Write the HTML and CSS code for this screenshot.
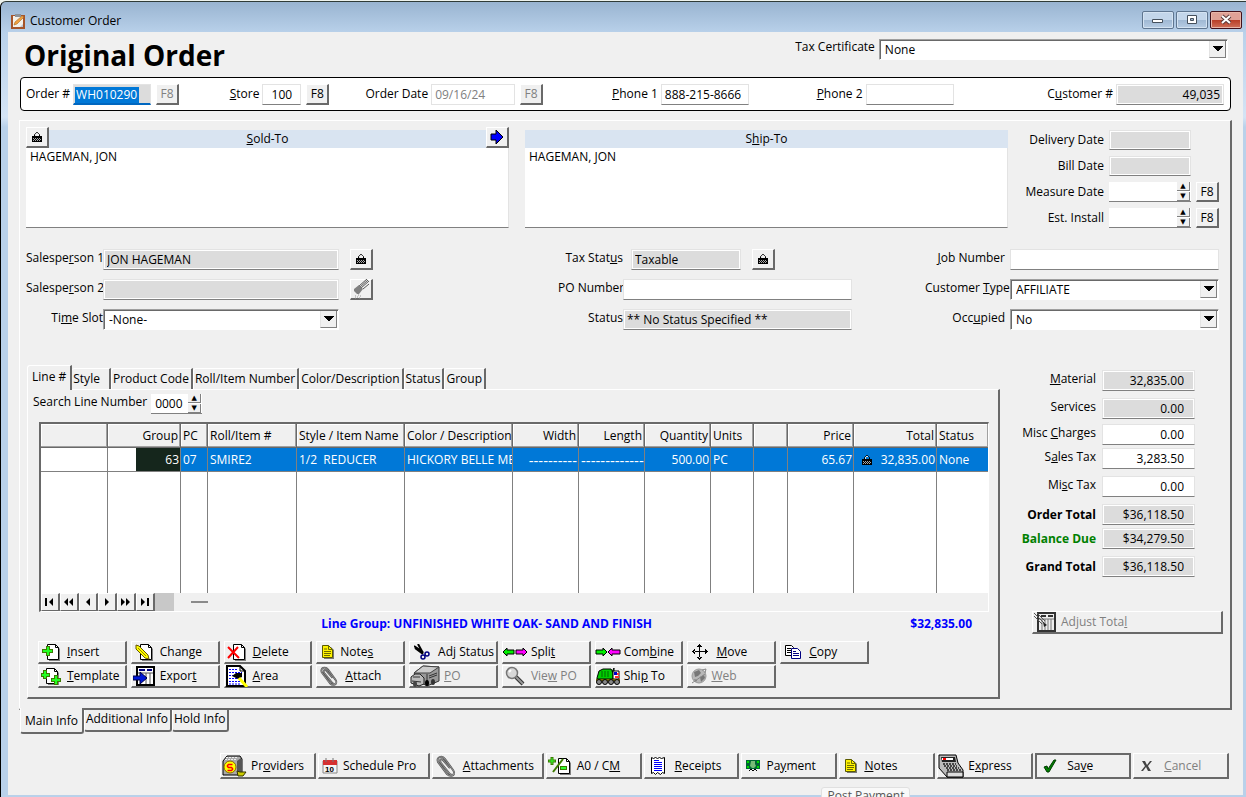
FILE: index.html
```
<!DOCTYPE html>
<html lang="en">
<head>
  <meta charset="UTF-8">
  <meta name="viewport" content="width=device-width, initial-scale=1.0">
  <title>Customer Order</title>
  <link rel="stylesheet" href="styles.css">
</head>
<body>
  <!-- shared icons -->
  <svg class="sprite" width="0" height="0" aria-hidden="true">
    <symbol id="lock" viewBox="0 0 12 12">
      <path d="M3.500 5V3.500l1-1 1-1h1l1 1 1 1V5" fill="none" stroke="#000" stroke-width="1"/>
      <path d="M1 5h10v6H1z" fill="#000"/>
      <path d="M2 7h1v1H2zM4 7h1v1H4zM6 7h1v1H6zM8 7h1v1H8zM3 8h1v1H3zM5 8h1v1H5zM7 8h1v1H7zM9 8h1v1H9zM2 9h1v1H2zM4 9h1v1H4zM6 9h1v1H6zM8 9h1v1H8z" fill="#aaa"/>
      <path d="M4 3h1v2H4zM5 2h2v1H5z" fill="#ddd"/>
    </symbol>
    <symbol id="down" viewBox="0 0 10 6"><path d="M0 0h10v1H9v1H8v1H7v1H6v1H4V4H3V3H2V2H1V1H0z"/></symbol>
    <symbol id="page" viewBox="0 0 20 20">
      <path d="M8 4h8l3 3v12H8z" fill="#808080"/>
      <path d="M6.500 2.500h8l3 3v12h-11z" fill="#fff" stroke="#000"/>
      <path d="M14.500 2.500v3h3" fill="none" stroke="#000"/>
    </symbol>
    <symbol id="note" viewBox="0 0 12 14">
      <path d="M2 2h7l3 3v9H2z" fill="#777"/>
      <path d="M.5.5h6l4 4v8H.5z" fill="#fff200" stroke="#5a5a00"/>
      <path d="M6.500.5v4h4M2 4h3M2 6.500h7M2 8.500h7M2 10.500h6" fill="none" stroke="#6b6b00"/>
    </symbol>
    <symbol id="clip" viewBox="0 0 20 22">
      <path d="M14 13L7 5C5 3 3 5 5 8l8 10c3 4 7 1 4-3L9 4C6 0 0 2 2 7l9 12c3 3 7 2 7-1" fill="none" stroke="#555" stroke-width="2"/>
      <path d="M14 13L7 5C5 3 3 5 5 8l8 10c3 4 7 1 4-3L9 4C6 0 0 2 2 7l9 12c3 3 7 2 7-1" fill="none" stroke="#aaa" stroke-width=".7"/>
    </symbol>
  </svg>

  <div class="window">
    <header class="titlebar">
      <svg class="app-icon" width="16" height="16" viewBox="0 0 16 16">
        <path d="M1 2h14v14H1z" fill="#a5542a"/><path d="M3 3h10v11H3z" fill="#f4f1ea"/>
        <path d="M5 1h6v3H5z" fill="#8d9299"/><path d="M4 12l1-3 7-6 2 1-7 7z" fill="#f0a040" stroke="#a66a20" stroke-width=".6"/>
        <path d="M10 14l3-3v3z" fill="#b9c4d2"/>
      </svg>
      <span class="caption">Customer Order</span>
      <button class="win-btn" aria-label="Minimize"><svg width="12" height="12" viewBox="0 0 12 12"><path d="M.5 5.500h10v3h-10z" fill="#fff" stroke="#45505c"/></svg></button>
      <button class="win-btn" aria-label="Maximize"><svg width="12" height="12" viewBox="0 0 12 12"><path d="M1.500 1.500h9v8h-9z" fill="#fff" stroke="#45505c"/><path d="M4.500 4.500h3v2h-3z" fill="#9db4cf" stroke="#45505c"/></svg></button>
      <button class="win-btn close" aria-label="Close"><svg width="12" height="12" viewBox="0 0 12 12"><path d="M2 2l8 7M10 2L2 9" stroke="#5a3a3a" stroke-width="4"/><path d="M2 2l8 7M10 2L2 9" stroke="#fff" stroke-width="2"/></svg></button>
    </header>

    <main class="client">
      <div class="heading">
        <h1>Original Order</h1>
        <label for="taxCert">Tax Certificate</label>
        <div class="combo">
          <select id="taxCert"><option>None</option></select>
          <span class="drop"><svg width="10" height="6"><use href="#down"/></svg></span>
        </div>
      </div>

      <section class="order-bar">
        <div class="pair">
          <label for="orderNo">Order #</label>
          <div class="order-no"><input class="field" id="orderNo" value="WH010290"></div>
          <button class="key" disabled>F8</button>
        </div>
        <div class="pair">
          <label for="store"><u>S</u>tore</label>
          <input class="field store" id="store" value="100">
          <button class="key">F8</button>
        </div>
        <div class="pair">
          <label for="orderDate">Order Date</label>
          <input class="field date" id="orderDate" value="09/16/24" disabled>
          <button class="key" disabled>F8</button>
        </div>
        <div class="pair">
          <label for="phone1"><u>P</u>hone 1</label>
          <input class="field phone" id="phone1" value="888-215-8666">
        </div>
        <div class="pair">
          <label for="phone2"><u>P</u>hone 2</label>
          <input class="field phone" id="phone2">
        </div>
        <div class="pair end">
          <label for="customerNo">C<u>u</u>stomer #</label>
          <input class="field customer" id="customerNo" value="49,035" readonly>
        </div>
      </section>

      <section class="sheet">
        <div class="parties">
          <div class="party">
            <div class="party-head">
              <button class="key" aria-label="Lock sold-to"><svg width="12" height="12"><use href="#lock"/></svg></button>
              <label for="soldTo"><u>S</u>old-To</label>
              <button class="key" aria-label="Copy to ship-to"><svg width="14" height="16" viewBox="0 0 14 16"><path d="M1 5h5V1l7 7-7 7v-4H1z" fill="#00f" stroke="#000"/></svg></button>
            </div>
            <textarea id="soldTo">HAGEMAN, JON</textarea>
          </div>
          <div class="party">
            <div class="party-head"><label for="shipTo">S<u>h</u>ip-To</label></div>
            <textarea id="shipTo">HAGEMAN, JON</textarea>
          </div>
          <div class="dates">
            <label for="delivery">Delivery Date</label>
            <input class="field" id="delivery" readonly>
            <label for="bill">Bill Date</label>
            <input class="field" id="bill" readonly>
            <label for="measure">Measure Date</label>
            <div class="spin"><input id="measure"><span class="arrows"><button aria-label="Up">&#9650;</button><button aria-label="Down">&#9660;</button></span></div>
            <button class="key">F8</button>
            <label for="install">Est. Install</label>
            <div class="spin"><input id="install"><span class="arrows"><button aria-label="Up">&#9650;</button><button aria-label="Down">&#9660;</button></span></div>
            <button class="key">F8</button>
          </div>
        </div>

        <div class="details">
          <div class="col sales">
            <label for="sp1">Salespe<u>r</u>son 1</label>
            <input class="field" id="sp1" value="JON HAGEMAN" readonly>
            <button class="key" aria-label="Lock salesperson"><svg width="12" height="12"><use href="#lock"/></svg></button>
            <label for="sp2">Salespe<u>r</u>son 2</label>
            <input class="field" id="sp2" readonly>
            <button class="key" aria-label="Clear salesperson"><svg width="16" height="20" viewBox="0 0 16 20"><path d="M6 7l8-7M8 9l8-7M7 8l8-7M10 10l6-5" stroke="#555"/><path d="M1 10l5-4 4 4-4 5H4L1 12z" fill="#808080"/><path d="M2 17h1M5 16h1M4 18h1M7 17h1M2 19h1M6 19h1" stroke="#999"/></svg></button>
            <label for="slot">Ti<u>m</u>e Slot</label>
            <div class="combo">
              <select id="slot"><option>-None-</option></select>
              <span class="drop"><svg width="10" height="6"><use href="#down"/></svg></span>
            </div>
          </div>
          <div class="col status">
            <label for="taxStatus">Tax Stat<u>u</u>s</label>
            <div class="tax">
              <input class="field" id="taxStatus" value="Taxable" readonly>
              <button class="key" aria-label="Lock tax status"><svg width="12" height="12"><use href="#lock"/></svg></button>
            </div>
            <label for="po">PO Number</label>
            <input class="field" id="po">
            <label for="orderStatus">Status</label>
            <input class="field" id="orderStatus" value="** No Status Specified **" readonly>
          </div>
          <div class="col job">
            <label for="job"><u>J</u>ob Number</label>
            <input class="field" id="job">
            <label for="custType">Customer <u>T</u>ype</label>
            <div class="combo">
              <select id="custType"><option>AFFILIATE</option></select>
              <span class="drop"><svg width="10" height="6"><use href="#down"/></svg></span>
            </div>
            <label for="occupied">Occ<u>u</u>pied</label>
            <div class="combo">
              <select id="occupied"><option>No</option></select>
              <span class="drop"><svg width="10" height="6"><use href="#down"/></svg></span>
            </div>
          </div>
        </div>

        <div class="lower">
          <div class="lines">
            <nav class="tabs">
              <button class="tab active">Line #</button>
              <button class="tab style">Style</button>
              <button class="tab">Product Code</button>
              <button class="tab">Roll/Item Number</button>
              <button class="tab">Color/Description</button>
              <button class="tab">Status</button>
              <button class="tab">Group</button>
            </nav>
            <div class="lines-panel">
              <div class="search">
                <label for="searchLine">Search Line Number</label>
                <div class="spin"><input id="searchLine" value="0000"><span class="arrows"><button aria-label="Up">&#9650;</button><button aria-label="Down">&#9660;</button></span></div>
              </div>

              <div class="grid">
                <table>
                  <colgroup>
                    <col class="w67"><col class="w73"><col class="w27"><col class="w89"><col class="w108"><col class="w108"><col class="w66">
                    <col class="w66"><col class="w66"><col class="w43"><col class="w34"><col class="w66"><col class="w83"><col class="w51">
                  </colgroup>
                  <thead>
                    <tr>
                      <th></th><th class="num">Group</th><th>PC</th><th>Roll/Item #</th><th>Style / Item Name</th><th>Color / Description</th><th class="num">Width</th>
                      <th class="num">Length</th><th class="num">Quantity</th><th>Units</th><th></th><th class="num">Price</th><th class="num">Total</th><th>Status</th>
                    </tr>
                  </thead>
                  <tbody>
                    <tr class="selected">
                      <td class="blank"></td><td class="num group">63</td><td>07</td><td>SMIRE2</td><td>1/2  REDUCER</td><td>HICKORY BELLE ME</td><td class="num dashes">----------</td>
                      <td class="num dashes">-------------</td><td class="num">500.00</td><td>PC</td><td></td><td class="num">65.67</td>
                      <td class="num"><span class="locked"><svg width="12" height="12"><use href="#lock"/></svg>32,835.00</span></td><td>None</td>
                    </tr>
                    <tr class="empty">
                      <td></td><td></td><td></td><td></td><td></td><td></td><td></td><td></td><td></td><td></td><td></td><td></td><td></td><td></td>
                    </tr>
                  </tbody>
                </table>
                <div class="pager">
                  <button aria-label="First"><svg width="12" height="8" viewBox="0 0 12 8"><path d="M1 0h2v8H1zM9 0v8L5 4z"/></svg></button>
                  <button aria-label="Previous page"><svg width="12" height="8" viewBox="0 0 12 8"><path d="M5 0v8L1 4zM10 0v8L6 4z"/></svg></button>
                  <button aria-label="Previous"><svg width="12" height="8" viewBox="0 0 12 8"><path d="M8 0v8L4 4z"/></svg></button>
                  <button aria-label="Next"><svg width="12" height="8" viewBox="0 0 12 8"><path d="M4 0v8l4-4z"/></svg></button>
                  <button aria-label="Next page"><svg width="12" height="8" viewBox="0 0 12 8"><path d="M1 0v8l4-4zM6 0v8l4-4z"/></svg></button>
                  <button aria-label="Last"><svg width="12" height="8" viewBox="0 0 12 8"><path d="M2 0v8l4-4zM8 0h2v8H8z"/></svg></button>
                  <span class="track"></span>
                  <span class="thumb"></span>
                </div>
              </div>

              <div class="group-line">
                <strong class="group-name">Line Group: UNFINISHED WHITE OAK- SAND AND FINISH</strong>
                <strong class="group-sum">$32,835.00</strong>
              </div>

              <div class="actions">
                <button class="btn"><span class="ico"><svg width="20" height="20" viewBox="0 0 20 20"><use href="#page"/><path d="M7 4v10M1 9h11" stroke="#3d7a00" stroke-width="4"/><path d="M7 5v8M2 9h9" stroke="#2f2" stroke-width="2"/></svg></span><span><u>I</u>nsert</span></button>
                <button class="btn"><span class="ico"><svg width="20" height="20" viewBox="0 0 20 20"><use href="#page"/><path d="M2 3l3 1 9 9 1 4-4-1-9-9z" fill="#ff0" stroke="#665500"/><path d="M4 6l8 8" stroke="#998800"/></svg></span><span>Chan<u>g</u>e</span></button>
                <button class="btn"><span class="ico"><svg width="20" height="20" viewBox="0 0 20 20"><use href="#page"/><path d="M1 5l11 11M11 5L1 16" stroke="#f00" stroke-width="2"/></svg></span><span><u>D</u>elete</span></button>
                <button class="btn small-ico"><span class="ico"><svg width="12" height="14"><use href="#note"/></svg></span><span>Note<u>s</u></span></button>
                <button class="btn"><span class="ico"><svg width="16" height="16" viewBox="0 0 16 16"><path d="M1 4l8 6M4 0l5 9M0 2l9 6" stroke="#000" stroke-width="2"/><circle cx="13" cy="10" r="2" fill="none" stroke="#000080" stroke-width="1.500"/><circle cx="9" cy="13" r="2" fill="none" stroke="#000080" stroke-width="1.500"/></svg></span><span>Adj Status</span></button>
                <button class="btn"><span class="ico"><svg width="26" height="10" viewBox="0 0 26 10"><path d="M1 5l4-4v2h7v4H5v2z" fill="#0e0" stroke="#000"/><path d="M25 5l-4-4v2h-7v4h7v2z" fill="#f0f" stroke="#000"/></svg></span><span>Spli<u>t</u></span></button>
                <button class="btn"><span class="ico"><svg width="26" height="10" viewBox="0 0 26 10"><path d="M12 5L8 1v2H1v4h7v2z" fill="#0e0" stroke="#000"/><path d="M13 5l4-4v2h8v4h-8v2z" fill="#f0f" stroke="#000"/></svg></span><span>Com<u>b</u>ine</span></button>
                <button class="btn"><span class="ico"><svg width="18" height="18" viewBox="0 0 18 18"><path d="M8 3h1v12H8zM3 8h12v1H3zM8 1h1v1h1v1h1v1H6V3h1V2h1zM8 17h1v-1h1v-1h1v-1H6v1h1v1h1zM1 8v1h1v1h1v1h1V6H3v1H2v1zM17 8v1h-1v1h-1v1h-1V6h1v1h1v1z"/></svg></span><span><u>M</u>ove</span></button>
                <button class="btn"><span class="ico"><svg width="16" height="14" viewBox="0 0 16 14"><path d="M.5.5h6l2 2v8h-8z" fill="#fff" stroke="#000"/><path d="M2 3.500h4M2 5.500h4M2 7.500h4" stroke="#000"/><path d="M6.500 3.500h6l3 3v7h-9z" fill="#fff" stroke="#000080"/><path d="M8 6.500h3M8 8.500h6M8 10.500h6" stroke="#000080"/></svg></span><span><u>C</u>opy</span></button>

                <button class="btn"><span class="ico"><svg width="22" height="20" viewBox="0 0 22 20"><use href="#page" width="20" height="20"/><path d="M5 4v9M1 9h9M16 9v10M11 14h10" stroke="#3d7a00" stroke-width="4"/><path d="M5 5v7M2 9h7M16 10v8M12 14h8" stroke="#2f2" stroke-width="2"/></svg></span><span><u>T</u>emplate</span></button>
                <button class="btn"><span class="ico"><svg width="22" height="20" viewBox="0 0 22 20"><path d="M4 1h17v18H4z" fill="#fff" stroke="#000" stroke-width="2"/><path d="M6 3h6v2H6zM14 3h5v2h-5z" fill="#000080"/><path d="M5 7h15M13 7v11M17 7v11" stroke="#555"/><path d="M0 10h7V6l7 6-7 6v-4H0z" fill="#0018d8" stroke="#000040"/></svg></span><span>Expor<u>t</u></span></button>
                <button class="btn"><span class="ico"><svg width="22" height="22" viewBox="0 0 22 22"><path d="M1 1h13l5 5v15H1z" fill="#fff" stroke="#000" stroke-width="2"/><path d="M14 1v5h5" fill="none" stroke="#000"/><path d="M3 4.500h9M3 7.500h13M3 10.500h13M3 13.500h9M3 16.500h11M3 19h12" stroke="#00f" stroke-dasharray="2 1"/><path d="M6 11l4-3h6v4l-4 2z" fill="#000"/><path d="M13 13l8 9" stroke="#ff0" stroke-width="3"/></svg></span><span><u>A</u>rea</span></button>
                <button class="btn"><span class="ico"><svg width="20" height="20"><use href="#clip"/></svg></span><span><u>A</u>ttach</span></button>
                <button class="btn big-ico" disabled><span class="ico"><svg width="30" height="22" viewBox="0 0 30 22"><path d="M4 8l9-7 16 1v14l-12 5-7-4z" fill="#999" stroke="#333"/><path d="M4 8l9-7 16 1-9 6z" fill="#ccc" stroke="#444"/><path d="M17 9v12" stroke="#333"/><path d="M1 12l4-3h5l4 4v6l-5 2-8-3z" fill="#bbb" stroke="#222"/><path d="M3 12h7M2 16l9 1M19 11l8-3M19 13l8-3" stroke="#333"/><ellipse cx="17" cy="18" rx="2" ry="3"/><ellipse cx="23" cy="17" rx="2" ry="3" fill="#333"/><ellipse cx="5" cy="19" rx="2" ry="3" fill="#444"/></svg></span><span><u>P</u>O</span></button>
                <button class="btn" disabled><span class="ico"><svg width="20" height="20" viewBox="0 0 20 20"><path d="M11 11l7 7" stroke="#333" stroke-width="4"/><path d="M11 11l7 7" stroke="#999" stroke-width="2"/><circle cx="7" cy="7" r="5.500" fill="#d8d8d8" stroke="#777" stroke-width="1.500"/><path d="M4 6l2-2" stroke="#fff" stroke-width="2"/></svg></span><span>Vie<u>w</u> PO</span></button>
                <button class="btn"><span class="ico"><svg width="26" height="18" viewBox="0 0 26 18"><path d="M2 11l2-7 4-2h8l2 3v7H2z" fill="#0c0" stroke="#000"/><path d="M7 4v6M10 4v6M13 4v6" stroke="#060"/><path d="M17 5l2-4v4z" fill="#0c0" stroke="#000"/><path d="M18 4h6v8h-6z" fill="#fff" stroke="#000"/><path d="M19 5h3v3h-3z" fill="#00c"/><path d="M22 6h2v2h-2zM20 9h4v2h-4z" fill="#f33"/><path d="M1 12h24v2H1z" fill="#7a6a00"/><g fill="#888" stroke="#000"><circle cx="4" cy="15" r="2.500"/><circle cx="10" cy="15" r="2.500"/><circle cx="16" cy="15" r="2.500"/><circle cx="22" cy="15" r="2.500"/></g></svg></span><span>Shi<u>p</u> To</span></button>
                <button class="btn small-ico" disabled><span class="ico"><svg width="16" height="16" viewBox="0 0 16 16"><circle cx="8" cy="8" r="7" fill="#b8b8b8" stroke="#999"/><path d="M3 4l5-2 2 3-3 3-3 1zM9 9l4-2 1 3-4 4zM3 11l3 1-1 2z" fill="#777"/><path d="M11 2l4-1-1 4M1 15l13-9" stroke="#888" fill="none"/></svg></span><span><u>W</u>eb</span></button>
              </div>
            </div>
          </div>

          <aside class="totals">
            <div class="sums">
              <label for="material"><u>M</u>aterial</label><input class="field" id="material" value="32,835.00" readonly>
              <label for="services">Services</label><input class="field" id="services" value="0.00" readonly>
              <label for="misc">Misc <u>C</u>harges</label><input class="field" id="misc" value="0.00">
              <label for="salesTax">S<u>a</u>les Tax</label><input class="field" id="salesTax" value="3,283.50">
              <label for="miscTax">Mi<u>s</u>c Tax</label><input class="field" id="miscTax" value="0.00">
              <label class="strong" for="orderTotal">Order Total</label><input class="field" id="orderTotal" value="$36,118.50" readonly>
              <label class="strong due" for="balance">Balance Due</label><input class="field" id="balance" value="$34,279.50" readonly>
              <label class="strong" for="grand">Grand Total</label><input class="field" id="grand" value="$36,118.50" readonly>
            </div>
            <button class="btn adjust" disabled><span class="ico"><svg width="22" height="20" viewBox="0 0 22 20"><path d="M4 1h17v18H4z" fill="#eee" stroke="#333" stroke-width="2"/><path d="M7 3h5v2H7zM14 3h5v2h-5z" fill="#333"/><path d="M5 7h15M8 7v11M11 7v11M14 7v11M17 7v11" stroke="#777"/><path d="M0 1l10 10M0 4l8 8M3 1l8 8" stroke="#555"/><path d="M9 10l4 3-3 2z" fill="#222"/></svg></span><span>Adjust Tota<u>l</u></span></button>
          </aside>
        </div>
      </section>

      <nav class="sheet-tabs">
        <button class="active">Main Info</button>
        <button>Additional Info</button>
        <button>Hold Info</button>
      </nav>

      <footer class="commands">
        <button class="btn"><span class="ico"><svg width="26" height="22" viewBox="0 0 26 22"><path d="M2 6l4-5h13l2 3v14l-3 2H2z" fill="#aaa" stroke="#000"/><path d="M5 2.500h12M4 4.500h12" stroke="#eee" stroke-dasharray="2 1"/><path d="M16 6l4-3v14l-4 2z" fill="#555"/><circle cx="9" cy="12" r="6" fill="#ff0" stroke="#886600"/><path d="M11.500 9.500h-4l-1 1v1l1 1h3l1 1v1l-1 1H6.500" fill="none" stroke="#f00" stroke-width="1.500"/><path d="M16 16l3 1h6l-3 4h-5z" fill="#cc0" stroke="#330"/></svg></span><span>Pr<u>o</u>viders</span></button>
        <button class="btn small-ico"><span class="ico"><svg width="16" height="16" viewBox="0 0 16 16"><path d="M1 3h14v12H1z" fill="#f6f6f6" stroke="#888"/><path d="M1 2h14v5H1z" fill="#d63030"/><path d="M4 0v4M11 0v4" stroke="#777"/><text class="cal-day" x="3" y="14">10</text></svg></span><span>Schedule Pro</span></button>
        <button class="btn"><span class="ico"><svg width="20" height="22"><use href="#clip"/></svg></span><span><u>A</u>ttachments</span></button>
        <button class="btn"><span class="ico"><svg width="24" height="20" viewBox="0 0 24 20"><use href="#page" x="4" width="20" height="20"/><path d="M4 1v8M0 5h8" stroke="#3d7a00" stroke-width="3"/><path d="M4 2v6M1 5h6" stroke="#3f3"/><path d="M15 3L5 16" stroke="#3d7a00" stroke-width="2"/><path d="M12 12h7" stroke="#3d7a00" stroke-width="4"/><path d="M13 12h5" stroke="#3f3" stroke-width="2"/></svg></span><span>A0 / C<u>M</u></span></button>
        <button class="btn"><span class="ico"><svg width="16" height="20" viewBox="0 0 16 20"><path d="M1.500 1.500l2 1 2-1 2 1 2-1 2 1 3-1v16l-2-1-2 2-3-2-2 2-2-2-2 1z" fill="#fff" stroke="#000"/><path d="M4 4.500h5M4 6.500h8M4 8.500h8M4 10.500h8M4 12.500h8M4 14.500h8" stroke="#00f"/></svg></span><span><u>R</u>eceipts</span></button>
        <div class="tip-host">
          <button class="btn small-ico"><span class="ico"><svg width="14" height="12" viewBox="0 0 14 12"><path d="M0 0h14v9H0z" fill="#063"/><path d="M1 1h2v2H1zM11 1h2v2h-2zM1 6h2v2H1zM11 6h2v2h-2z" fill="#0d0"/><path d="M5 1h4v3l1 2-2 2H6L4 6z" fill="#7b7"/><path d="M3 11l2-2 2 2 2-2 2 2" fill="none" stroke="#000"/></svg></span><span>Pa<u>y</u>ment</span></button>
          <span class="tip" role="tooltip">Post Payment</span>
        </div>
        <button class="btn small-ico"><span class="ico"><svg width="12" height="14"><use href="#note"/></svg></span><span><u>N</u>otes</span></button>
        <button class="btn"><span class="ico"><svg width="26" height="24" viewBox="0 0 26 24"><path d="M1 1h17l2 8 5 7v7H9L1 14z" fill="#bbb" stroke="#000"/><path d="M3 3h14l1 5H4z" fill="#222"/><path d="M4 4h11v2H4z" fill="#fff"/><path d="M5 4h3v2H5z" fill="#f00"/><path d="M5 10h13M6 12h13M8 14h13M9 16h14" stroke="#222" stroke-width="1.500" stroke-dasharray="2 1"/><path d="M9 18h16v5H9z" fill="#ddd" stroke="#000"/></svg></span><span>E<u>x</u>press</span></button>
        <button class="btn default"><span class="ico"><svg width="14" height="14" viewBox="0 0 14 14"><path d="M1 8l3-1 1 3 6-9h2L6 13H4z" fill="#008000" stroke="#003c00"/></svg></span><span>Sa<u>v</u>e</span></button>
        <button class="btn" disabled><span class="ico"><svg width="12" height="12" viewBox="0 0 12 12"><path d="M1 1h3l2 4 3-4h2L7 6l3 5H7L5 7l-3 4H0l4-5z" fill="#444"/></svg></span><span><u>C</u>ancel</span></button>
      </footer>
    </main>
  </div>
</body>
</html>
```
FILE: styles.css
```
* {
  box-sizing: border-box;
}
body {
  margin: 0;
  padding-top: 1px;
  background-color: #eef3ee;
  font-family: 'Segoe UI', 'Open Sans', 'Noto Sans', sans-serif;
  font-size: 12px;
  line-height: 16px;
  color: #000;
  overflow: hidden;
}
button, input, select, textarea {
  font: inherit;
  color: inherit;
  margin: 0;
  padding: 0;
  border: 0;
  min-width: 0;
  border-radius: 0;
  outline: none;
}
button {
  background-color: #f0f0f0;
  white-space: nowrap;
}
svg {
  display: block;
  flex: none;
}
.sprite {
  position: absolute;
}
label {
  white-space: nowrap;
}

/* window frame */
.window {
  min-height: calc(100vh - 1px);
  display: flex;
  flex-direction: column;
  border-top: 1px solid #2f3b38;
  border-left: 1px solid #000;
  border-top-left-radius: 6px;
  padding: 0 3px 2px 7px;
  background: linear-gradient(#99b4d1, #b9d1ea 31px, #d5e4f5 115px, #b9d1ea 125px);
}
.titlebar {
  display: flex;
  align-items: center;
  gap: 2px;
  height: 30px;
  padding: 7px 1px 0 2px;
}
.caption {
  flex: 1;
  padding-left: 2px;
}
.win-btn {
  width: 32px;
  height: 18px;
  margin-bottom: 1px;
  display: flex;
  align-items: center;
  justify-content: center;
  border: 1px solid #5f7690;
  border-radius: 2px;
  background: linear-gradient(#c3d6ea 48%, #9fb8d3 50%, #b7cde4);
  box-shadow: inset 0 0 0 1px #d4e3f2;
}
.win-btn.close {
  border-color: #43101a;
  background: linear-gradient(#e0a196 48%, #b83c25 50%, #d0705a);
  box-shadow: inset 0 0 0 1px #e8b5a8;
}
.client {
  flex: 1;
  padding: 0 12px;
  background-color: #f0f0f0;
}

/* shared controls */
.field {
  height: 21px;
  padding: 0 3px;
  border: 1px solid #e3e3e3;
  border-bottom-color: #808080;
  background-color: #fff;
}
.field:read-only {
  background-color: #dcdcdc;
  box-shadow: inset 0 0 0 1px #fff;
}
.field:disabled {
  background-color: #fff;
  border-bottom-color: #e3e3e3;
  box-shadow: none;
  color: #808080;
}
.key {
  width: 23px;
  height: 21px;
  display: flex;
  align-items: center;
  justify-content: center;
  border: 1px solid #fff;
  border-right: 2px solid #696969;
  border-bottom: 2px solid #696969;
}
.key:disabled {
  color: #808080;
}
.combo {
  display: flex;
  height: 21px;
  border: 1px solid #a0a0a0;
  border-right-color: #fff;
  border-bottom-color: #fff;
  background-color: #fff;
  box-shadow: inset 1px 1px 0 #696969;
}
.combo select {
  flex: 1;
  appearance: none;
  padding-left: 5px;
  background: none;
}
.drop {
  width: 17px;
  margin: 1px 1px 1px 0;
  display: flex;
  align-items: center;
  justify-content: center;
  background-color: #f0f0f0;
  border-right: 1px solid #808080;
  border-bottom: 1px solid #808080;
  border-left: 1px solid #e3e3e3;
}
.spin {
  display: flex;
  height: 20px;
  background-color: #fff;
  border-bottom: 1px solid #808080;
}
.spin input {
  flex: 1;
  width: 0;
  padding-left: 4px;
  background: none;
}
.arrows {
  display: flex;
  flex-direction: column;
  gap: 1px;
  padding-right: 1px;
}
.arrows button {
  width: 13px;
  height: 9px;
  border-right: 1px solid #808080;
  border-bottom: 1px solid #808080;
  font-family: 'DejaVu Sans', sans-serif;
  font-size: 7px;
  line-height: 7px;
}
.btn {
  display: flex;
  align-items: center;
  border: 1px solid #fff;
  border-right: 2px solid #696969;
  border-bottom: 2px solid #696969;
}
.btn:disabled {
  color: #808080;
}
.ico {
  flex: none;
  width: 28px;
  display: flex;
  justify-content: center;
  padding-right: 4px;
}
.small-ico .ico {
  width: 23px;
  padding-right: 2px;
}
.big-ico .ico {
  width: 34px;
}

/* heading */
.heading {
  display: flex;
  align-items: flex-start;
  height: 45px;
  padding: 7px 3px 0 4px;
}
.heading h1 {
  flex: 1;
  margin: 0;
  font-size: 28px;
  line-height: 32px;
}
.heading label {
  margin-right: 4px;
}
.heading .combo {
  flex: 0 0 29%;
}

/* order bar */
.order-bar {
  display: grid;
  grid-template-columns: 204fr 136fr 247fr 205fr 231fr 176fr;
  align-items: center;
  height: 34px;
  margin-bottom: 9px;
  padding: 0 6px 0 5px;
  border: 1px solid #000;
  border-radius: 4px;
  background-color: #fff;
}
.pair {
  display: flex;
  align-items: center;
  gap: 3px;
}
.pair.end {
  justify-content: flex-end;
}
.pair .key {
  margin-left: 2px;
}
.order-no {
  width: 78px;
  height: 21px;
  padding: 2px 1px 0;
  border: 1px solid #e3e3e3;
  border-bottom: 2px solid #0067c0;
  background-color: #dcdcdc;
}
.order-no .field {
  width: 64px;
  height: 16px;
  padding: 0 1px;
  border: 0;
  background-color: #0078d7;
  color: #fff;
}
.store {
  width: 39px;
  text-align: center;
}
.date {
  width: 84px;
}
.phone {
  width: 88px;
}
.customer {
  width: 108px;
  text-align: right;
}

/* main sheet */
.sheet {
  margin: 0 -1px;
  padding: 7px 11px 9px 6px;
  border: 1px solid #fff;
  border-right: 2px solid #696969;
  border-bottom: 2px solid #696969;
}
.parties {
  display: grid;
  grid-template-columns: 483fr 483fr 195fr;
  gap: 16px;
  height: 100px;
}
.party {
  display: flex;
  flex-direction: column;
}
.party-head {
  display: flex;
  align-items: flex-end;
  height: 20px;
  background: linear-gradient(#f0f0f0 2px, #d9e4f1 2px);
}
.party-head label {
  flex: 1;
  text-align: center;
  line-height: 18px;
}
.party textarea {
  flex: 1;
  padding: 1px 4px;
  resize: none;
  background-color: #fff;
  border-right: 1px solid #e3e3e3;
  border-bottom: 1px solid #808080;
}
.dates {
  display: grid;
  grid-template-columns: 1fr 82px 23px;
  column-gap: 5px;
  align-content: space-between;
  align-items: center;
  padding-top: 2px;
}
.dates label {
  grid-column: 1;
  text-align: right;
}
.dates .field, .dates .key {
  height: 20px;
}

.details {
  display: grid;
  grid-template-columns: 347fr 185fr 294fr 73fr 294fr;
  margin-top: 21px;
}
.col {
  display: grid;
  grid-auto-rows: 21px;
  row-gap: 9px;
  column-gap: 3px;
  align-items: center;
}
.col label {
  grid-column: 1;
  text-align: right;
  line-height: 18px;
  align-self: start;
}
.sales {
  grid-template-columns: 77px 1fr 34px;
  column-gap: 0;
}
.sales .key {
  justify-self: end;
}
.status {
  grid-column: 3;
  grid-template-columns: 65px 1fr;
  column-gap: 0;
}
.job {
  grid-column: 5;
  grid-template-columns: 80px 1fr;
  column-gap: 5px;
}
.tax {
  display: flex;
  gap: 11px;
  padding-left: 8px;
}
.tax .field {
  width: 110px;
}

/* line items */
.lower {
  display: grid;
  grid-template-columns: 973fr 223fr;
  margin: 35px -4px 0 1px;
}
.tabs {
  display: flex;
  align-items: flex-end;
  height: 24px;
}
.tab {
  height: 21px;
  padding: 0 2px 0 1px;
  border: 1px solid #fff;
  border-right: 2px solid #696969;
  border-bottom: 0;
  border-top-left-radius: 3px;
}
.tab.active {
  height: 25px;
  padding: 0 4px 3px 4px;
  margin-bottom: -1px;
}
.tab.style {
  padding-right: 9px;
  border-left: 0;
}
.lines-panel {
  padding: 4px 9px 9px 11px;
  border: 1px solid #fff;
  border-right: 2px solid #696969;
  border-bottom: 2px solid #696969;
}
.search {
  display: flex;
  gap: 4px;
  height: 28px;
  margin-left: -6px;
}
.search .spin {
  width: 51px;
}
.grid {
  border: 2px solid #696969;
  border-right: 1px solid #fff;
  border-bottom: 1px solid #fff;
  background-color: #fff;
}
.grid table {
  width: 100%;
  table-layout: fixed;
  border-collapse: separate;
  border-spacing: 0;
}
.w27 { width: 27px; }
.w34 { width: 34px; }
.w43 { width: 43px; }
.w51 { width: 51px; }
.w66 { width: 66px; }
.w67 { width: 67px; }
.w73 { width: 73px; }
.w83 { width: 83px; }
.w89 { width: 89px; }
.w108 { width: 108px; }
.grid th {
  height: 24px;
  padding: 0 2px;
  background-color: #f0f0f0;
  border-right: 1px solid #696969;
  border-bottom: 1px solid #696969;
  box-shadow: inset -1px -1px 0 #a0a0a0, inset 1px 1px 0 #fff;
  font-weight: normal;
  text-align: left;
  white-space: nowrap;
}
.grid td {
  height: 24px;
  padding: 0 1px 0 2px;
  border-right: 1px solid #808080;
  overflow: hidden;
  white-space: pre;
}
.grid th:last-child, .grid td:last-child {
  border-right: 0;
}
.grid .num {
  text-align: right;
}
.selected td {
  background-color: #0078d7;
  border-bottom: 1px solid #808080;
  color: #fff;
}
.selected .blank {
  background-color: #fff;
}
.selected .group {
  background: linear-gradient(to right, #fff 28px, #15261c 28px);
}
.selected .dashes {
  font-size: 15px;
}
.locked {
  display: flex;
  justify-content: space-between;
  align-items: center;
  padding-left: 5px;
}
.grid .empty td {
  height: 121px;
}
.pager {
  display: flex;
  align-items: center;
  height: 18px;
  background-color: #f0f0f0;
}
.pager button {
  width: 19px;
  height: 18px;
  display: flex;
  align-items: center;
  justify-content: center;
  border: 1px solid #fff;
  border-right: 2px solid #696969;
  border-bottom: 1px solid #696969;
}
.track {
  width: 19px;
  height: 18px;
  background-color: #c8c8c8;
}
.thumb {
  width: 17px;
  height: 2px;
  margin-left: 17px;
  background-color: #8a8a8a;
}
.group-line {
  display: grid;
  grid-template-columns: 1fr auto;
  padding: 4px 17px 9px 24px;
  color: #00f;
}
.group-name {
  text-align: center;
}
.actions {
  display: grid;
  grid-template-columns: repeat(9, 1fr);
  grid-auto-rows: 23px;
  gap: 1px 4px;
  margin-left: -1px;
  padding-right: 120px;
}

/* totals */
.totals {
  padding: 5px 0 0 4px;
}
.sums {
  display: grid;
  grid-template-columns: 1fr 93px;
  grid-template-rows: 28px 26px 24px 28px 28px 24px 28px 20px;
  column-gap: 6px;
  padding-right: 28px;
}
.sums label {
  text-align: right;
  line-height: 18px;
}
.sums .field {
  padding-right: 10px;
  text-align: right;
}
.sums .strong {
  font-weight: bold;
  line-height: 22px;
}
.due {
  color: #008000;
}
.adjust {
  width: 191px;
  height: 23px;
  margin: 35px 0 0 auto;
}

/* sheet tabs and command row */
.sheet-tabs {
  display: flex;
  align-items: flex-start;
  height: 43px;
}
.sheet-tabs button {
  height: 22px;
  padding: 0 2px 2px 1px;
  border-right: 2px solid #696969;
  border-bottom: 2px solid #696969;
  border-left: 1px solid #fff;
  border-radius: 0 0 3px 3px;
}
.sheet-tabs .active {
  height: 26px;
  margin-top: -2px;
  padding: 2px 4px 0 4px;
}
.commands {
  display: grid;
  grid-template-columns: 96fr 112fr 112fr repeat(7, 96fr);
  grid-auto-rows: 26px;
  gap: 2px;
  margin-left: 200px;
  padding-right: 2px;
}
.commands .ico {
  width: 30px;
}
.commands .small-ico .ico {
  width: 24px;
}
.btn.default {
  border: 2px solid #696969;
}
.tip-host {
  position: relative;
  display: grid;
}
.tip {
  position: absolute;
  left: 80px;
  top: 34px;
  padding: 0 5px;
  border: 1px solid #e0e0e0;
  border-radius: 3px;
  background-color: #f9f9f9;
  color: #575757;
  white-space: nowrap;
}
.cal-day {
  font-family: 'Liberation Sans', sans-serif;
  font-size: 8px;
  font-weight: bold;
}
```
